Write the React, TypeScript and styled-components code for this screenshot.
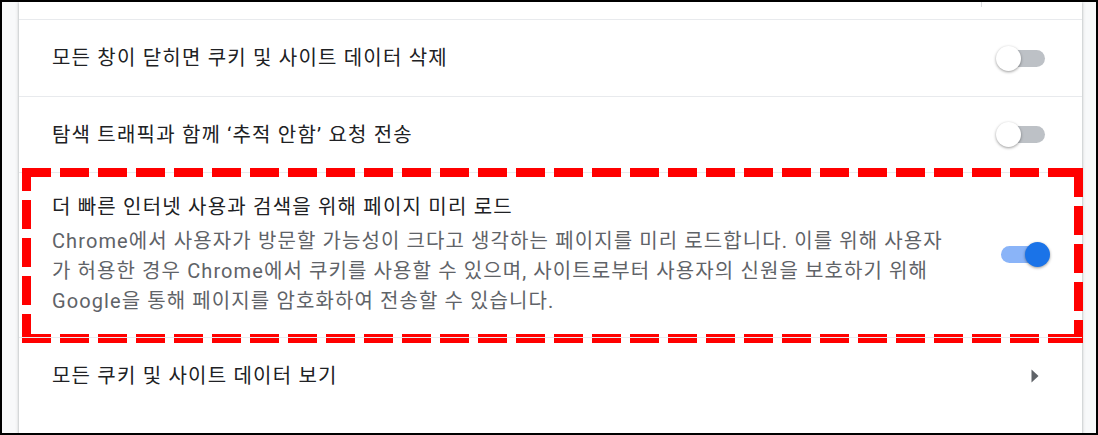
import React from "react";
import styled, { createGlobalStyle } from "styled-components";

const GlobalStyle = createGlobalStyle`
  html, body { margin: 0; padding: 0; background: #ffffff; }
  #root { width: 1098px; height: 435px; }
`;

const Frame = styled.div`
  box-sizing: border-box;
  width: 1098px;
  height: 435px;
  border: 2px solid #000000;
  background: #f8f9fa;
  display: flex;
  padding: 0 14px 0 17px;
  overflow: hidden;
  font-family: Roboto, "Noto Sans CJK KR", sans-serif;
`;

const Card = styled.div`
  flex: 1;
  background: #ffffff;
  display: flex;
  flex-direction: column;
  box-shadow: 0 1px 2px rgba(60, 64, 67, 0.3), 0 1px 3px 1px rgba(60, 64, 67, 0.15);
`;

const PrevRow = styled.div`
  height: 17px;
  display: flex;
  justify-content: flex-end;
  padding-right: 100px;
`;

const Separator = styled.span`
  width: 1px;
  height: 5px;
  background: #dadce0;
`;

const Row = styled.div<{ $h: number }>`
  position: relative;
  box-sizing: border-box;
  display: flex;
  align-items: center;
  min-height: ${(p) => p.$h}px;
  padding: 0 32px 0 33px;
  border-top: 1px solid #e8eaed;
`;

const TextBlock = styled.div`
  flex: 1;
  display: flex;
  flex-direction: column;
`;

const Label = styled.div`
  font-size: 20px;
  line-height: 30px;
  letter-spacing: 1.2px;
  color: #202124;
  white-space: nowrap;
`;

const Secondary = styled.div`
  font-size: 20px;
  line-height: 30px;
  letter-spacing: 1.1px;
  color: #5f6368;
  margin-top: 4px;
  white-space: nowrap;
`;

const ToggleBox = styled.div`
  position: relative;
  width: 54px;
  height: 25px;
  flex: none;
`;

const Track = styled.span<{ $on: boolean }>`
  position: absolute;
  left: 5px;
  top: 4px;
  width: 44px;
  height: 17px;
  border-radius: 9px;
  background: ${(p) => (p.$on ? "#8ab4f8" : "#bdc1c6")};
`;

const Knob = styled.span<{ $on: boolean }>`
  position: absolute;
  top: 0;
  left: ${(p) => (p.$on ? "29px" : "0px")};
  width: 25px;
  height: 25px;
  border-radius: 50%;
  background: ${(p) => (p.$on ? "#1a73e8" : "#ffffff")};
  box-shadow: 0 1px 3px rgba(0, 0, 0, 0.4);
`;

const Arrow = styled.svg`
  flex: none;
  margin-right: 11px;
`;

const Highlight = styled.svg`
  position: absolute;
  left: 3px;
  top: -5px;
  pointer-events: none;
`;

function Toggle({ on }: { on: boolean }) {
  return (
    <ToggleBox>
      <Track $on={on} />
      <Knob $on={on} />
    </ToggleBox>
  );
}

const ExpandedRow = styled(Row)`
  align-items: center;
  padding-top: 19px;
  padding-bottom: 21px;
`;

export default function App() {
  return (
    <>
      <GlobalStyle />
      <Frame>
        <Card>
          <PrevRow>
            <Separator />
          </PrevRow>
          <Row $h={77}>
            <TextBlock>
              <Label>모든 창이 닫히면 쿠키 및 사이트 데이터 삭제</Label>
            </TextBlock>
            <Toggle on={false} />
          </Row>
          <Row $h={76}>
            <TextBlock>
              <Label>탐색 트래픽과 함께 ‘추적 안함’ 요청 전송</Label>
            </TextBlock>
            <Toggle on={false} />
          </Row>
          <ExpandedRow $h={165}>
            <TextBlock>
              <Label>더 빠른 인터넷 사용과 검색을 위해 페이지 미리 로드</Label>
              <Secondary>
                Chrome에서 사용자가 방문할 가능성이 크다고 생각하는 페이지를 미리 로드합니다. 이를 위해 사용자
                <br />
                가 허용한 경우 Chrome에서 쿠키를 사용할 수 있으며, 사이트로부터 사용자의 신원을 보호하기 위해
                <br />
                Google을 통해 페이지를 암호화하여 전송할 수 있습니다.
              </Secondary>
            </TextBlock>
            <Toggle on={true} />
            <Highlight width="1061" height="175" viewBox="0 0 1061 175">
              <g stroke="#ff0000" strokeWidth="9" fill="none" strokeDasharray="29 9">
                <line x1="0" y1="4.5" x2="1061" y2="4.5" />
                <line x1="1056.5" y1="0" x2="1056.5" y2="175" />
                <line x1="0" y1="170.5" x2="1061" y2="170.5" />
                <line x1="4.5" y1="175" x2="4.5" y2="0" />
              </g>
            </Highlight>
          </ExpandedRow>
          <Row $h={76}>
            <TextBlock>
              <Label>모든 쿠키 및 사이트 데이터 보기</Label>
            </TextBlock>
            <Arrow width="8" height="14" viewBox="0 0 8 14">
              <path d="M0.5 0.5 L7.5 7 L0.5 13.5 Z" fill="#5f6368" />
            </Arrow>
          </Row>
        </Card>
      </Frame>
    </>
  );
}
